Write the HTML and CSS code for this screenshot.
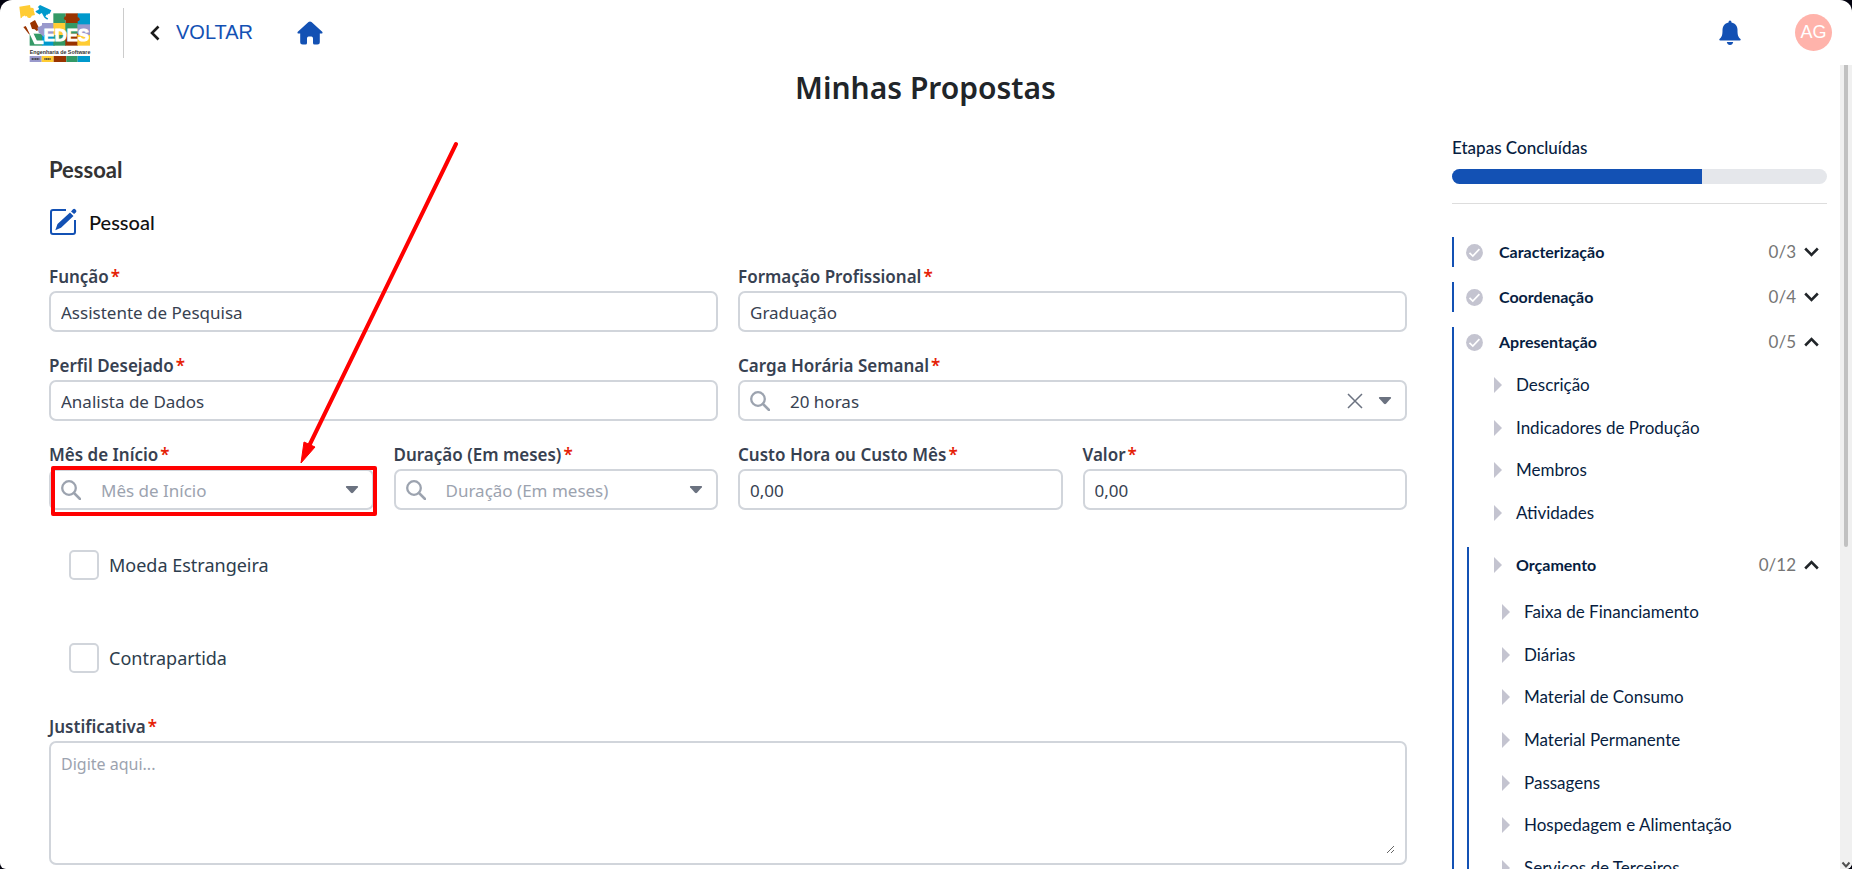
FILE: index.html
```html
<!DOCTYPE html>
<html lang="pt-BR">
<head>
<meta charset="utf-8">
<title>Minhas Propostas</title>
<meta name="viewport" content="width=device-width, initial-scale=1">
<link rel="stylesheet" href="styles.css">
</head>
<body>
<svg class="sprite" aria-hidden="true">
  <symbol id="i-search" viewBox="0 0 20 20"><circle cx="8" cy="8" r="6.8" fill="none" stroke="currentColor" stroke-width="2.3"/><path d="M13 13l6 6" stroke="currentColor" stroke-width="2.5" stroke-linecap="round"/></symbol>
  <symbol id="i-caret" viewBox="0 0 14 9"><path d="M1.6 1h10.8q1.2.2.5 1.2L8 7.7q-1 .9-2 0L1.100 2.200q-.7-1 .5-1.200z" fill="currentColor"/></symbol>
  <symbol id="i-check" viewBox="0 0 17 17"><circle cx="8.500" cy="8.500" r="8.400" fill="#c4c4d0"/><path d="M3.500 8.800l3.300 3.200 6.600-6.800" fill="none" stroke="#fff" stroke-width="1.700"/></symbol>
  <symbol id="i-down" viewBox="0 0 15 10"><path d="M1.200 1.500l6.300 6.300 6.300-6.300" fill="none" stroke="#212529" stroke-width="2.600"/></symbol>
  <symbol id="i-up" viewBox="0 0 15 10"><path d="M1.200 8.500l6.300-6.300 6.300 6.300" fill="none" stroke="#212529" stroke-width="2.600"/></symbol>
  <symbol id="i-tri" viewBox="0 0 8 16"><path d="M0 0l8 8-8 8z" fill="#c4c4d0"/></symbol>
</svg>
<div class="app">
  <header class="topbar">
    <svg class="logo" viewBox="0 0 252 192" role="img" aria-label="LEDES Engenharia de Software">
      <rect x="118" y="37" width="37" height="32" fill="#339966"/>
      <rect x="155" y="37" width="37" height="32" fill="#993300"/>
      <rect x="191" y="37" width="37" height="36" fill="#0099cc"/>
      <rect x="84" y="66" width="36" height="40" fill="#9999cc"/>
      <rect x="118" y="66" width="38" height="40" fill="#ffcc33"/>
      <rect x="154" y="66" width="38" height="36" fill="#339966"/>
      <rect x="190" y="70" width="38" height="36" fill="#9999cc"/>
      <rect x="47" y="98" width="38" height="36" fill="#339966"/>
      <rect x="84" y="102" width="38" height="32" fill="#0099cc"/>
      <rect x="118" y="102" width="38" height="32" fill="#339966"/>
      <rect x="154" y="98" width="38" height="36" fill="#993300"/>
      <rect x="190" y="102" width="38" height="32" fill="#ffcc33"/>
      <circle cx="156" cy="52" r="6" fill="#993300"/><circle cx="191" cy="55" r="6" fill="#993300"/>
      <path d="M16 17l32-5 2 9c5-3 12 1 9 7l4 14-10 2c-1 9-14 9-14 1l-19 7z" fill="#ffcc33"/>
      <path d="M78 12l34 16-5 10c-8-1-10 8-3 11l-4 7-36-24 5-4c7 0 8-8 2-9z" fill="#0099cc"/>
      <path d="M48 66l15-9 14 28-9 5-6-5-8-1z" fill="#993300"/>
      <path d="M28 78l8-3 15 24-6 1z" fill="#993300"/>
      <path d="M70 80l20-10v38l-16-14z" fill="#9999cc"/>
      <path d="M28 46l37 78h24" fill="none" stroke="#fff" stroke-width="11"/>
      <path d="M64 45l15 27M80 38l13 24M96 44l14 8" stroke="#fff" stroke-width="8"/>
      <text class="logo-name" x="89" y="121">EDES</text>
      <text class="logo-sub" x="47" y="159">Engenharia de Software</text>
      <rect x="47" y="165" width="36" height="18" fill="#9999cc"/><rect x="83" y="165" width="36" height="18" fill="#ffcc33"/>
      <rect x="119" y="165" width="38" height="18" fill="#993300"/><rect x="157" y="165" width="34" height="18" fill="#339966"/><rect x="191" y="165" width="37" height="18" fill="#0099cc"/>
      <path d="M53 174h23M91 174h20" stroke="#333" stroke-width="5" stroke-dasharray="4 1"/>
    </svg>
    <a class="back" href="#">
      <svg width="10" height="16" viewBox="0 0 10 16"><path d="M8.500 1.500L2 8l6.500 6.500" fill="none" stroke="#1b1b1b" stroke-width="2.600"/></svg>
      <span>VOLTAR</span>
    </a>
    <a class="home" href="#" aria-label="Início"><svg width="26" height="24" viewBox="0 0 26 24"><path d="M13 .5q.8 0 1.500.6l10.700 9.600q.8.800 0 1.800h-2.400v8.500q0 2.500-2.500 2.500h-2.800q-1.500 0-1.500-1.500v-4.500q0-2-1.600-2h-2.800q-1.600 0-1.600 2V22q0 1.500-1.500 1.500H5.700q-2.500 0-2.500-2.500v-8.500H.8q-.8-1 0-1.800L11.500 1.100Q12.200.5 13 .5z" fill="#1351b4"/></svg></a>
    <button class="bell" type="button" aria-label="Notificações"><svg width="22" height="26" viewBox="0 0 22 26"><path d="M11 .5q1.500 0 1.500 2c4 .8 6 4 6 7.500 0 5 .6 7 3 9q.7 1.500-.8 1.500H1.300q-1.500 0-.8-1.500c2.400-2 3-4 3-9 0-3.500 2-6.700 6-7.500q0-2 1.500-2zM7.800 22h6.400q-.6 3-3.200 3t-3.200-3z" fill="#1351b4"/></svg></button>
    <button class="avatar" type="button">AG</button>
  </header>
  <div class="body">
    <div class="page">
      <h1>Minhas Propostas</h1>
      <div class="columns">
        <form class="form">
          <h2>Pessoal</h2>
          <h3><svg width="28" height="28" viewBox="0 0 28 28"><path d="M17 2H4Q2 2 2 4v20q0 2 2 2h20q2 0 2-2V12" fill="none" stroke="#1351b4" stroke-width="2"/><path d="M21 4.500l3.500 3.500L12 19.800 6.300 22.200 8.500 16zM22 3.400L24 1.300q1.200-1 2.400.2l.6.600q1 1.200-.2 2.300l-1.700 1.700z" fill="#1351b4"/></svg>Pessoal</h3>
          <div class="grid">
            <div class="field wide"><label for="funcao">Função<b>*</b></label><input id="funcao" class="box" type="text" value="Assistente de Pesquisa"></div>
            <div class="field wide"><label for="formacao">Formação Profissional<b>*</b></label><input id="formacao" class="box" type="text" value="Graduação"></div>
            <div class="field wide"><label for="perfil">Perfil Desejado<b>*</b></label><input id="perfil" class="box" type="text" value="Analista de Dados"></div>
            <div class="field wide"><label for="carga">Carga Horária Semanal<b>*</b></label>
              <div class="box combo"><svg class="search"><use href="#i-search"/></svg><select id="carga"><option>20 horas</option></select><button class="clear" type="button" aria-label="Limpar"><svg width="16" height="16" viewBox="0 0 16 16"><path d="M1 1l14 14M15 1L1 15" stroke="#6b7280" stroke-width="1.500"/></svg></button><svg class="caret"><use href="#i-caret"/></svg></div></div>
            <div class="field marked"><label for="mes">Mês de Início<b>*</b></label>
              <div class="box combo"><svg class="search"><use href="#i-search"/></svg><select id="mes" class="empty"><option>Mês de Início</option></select><svg class="caret"><use href="#i-caret"/></svg></div></div>
            <div class="field"><label for="duracao">Duração (Em meses)<b>*</b></label>
              <div class="box combo"><svg class="search"><use href="#i-search"/></svg><select id="duracao" class="empty"><option>Duração (Em meses)</option></select><svg class="caret"><use href="#i-caret"/></svg></div></div>
            <div class="field"><label for="custo">Custo Hora ou Custo Mês<b>*</b></label><input id="custo" class="box" type="text" value="0,00"></div>
            <div class="field"><label for="valor">Valor<b>*</b></label><input id="valor" class="box" type="text" value="0,00"></div>
          </div>
          <div class="checks">
            <label><input type="checkbox">Moeda Estrangeira</label>
            <label><input type="checkbox">Contrapartida</label>
          </div>
          <div class="field"><label for="just">Justificativa<b>*</b></label><div class="area"><textarea id="just" placeholder="Digite aqui..."></textarea></div></div>
        </form>
        <aside class="steps">
          <p class="done">Etapas Concluídas</p>
          <div class="progress"><div class="fill"></div></div>
          <hr>
          <section class="step"><button type="button"><svg class="check"><use href="#i-check"/></svg><span class="name">Caracterização</span><span class="count">0/3</span><svg class="chev"><use href="#i-down"/></svg></button></section>
          <section class="step"><button type="button"><svg class="check"><use href="#i-check"/></svg><span class="name">Coordenação</span><span class="count">0/4</span><svg class="chev"><use href="#i-down"/></svg></button></section>
          <section class="step"><button type="button"><svg class="check"><use href="#i-check"/></svg><span class="name">Apresentação</span><span class="count">0/5</span><svg class="chev"><use href="#i-up"/></svg></button>
            <ul class="sub first">
              <li><a href="#"><svg class="tri"><use href="#i-tri"/></svg>Descrição</a></li>
              <li><a href="#"><svg class="tri"><use href="#i-tri"/></svg>Indicadores de Produção</a></li>
              <li><a href="#"><svg class="tri"><use href="#i-tri"/></svg>Membros</a></li>
              <li><a href="#"><svg class="tri"><use href="#i-tri"/></svg>Atividades</a></li>
            </ul>
            <section class="nested"><button type="button"><svg class="tri"><use href="#i-tri"/></svg><span class="name">Orçamento</span><span class="count">0/12</span><svg class="chev"><use href="#i-up"/></svg></button>
              <ul class="sub second">
                <li><a href="#"><svg class="tri"><use href="#i-tri"/></svg>Faixa de Financiamento</a></li>
                <li><a href="#"><svg class="tri"><use href="#i-tri"/></svg>Diárias</a></li>
                <li><a href="#"><svg class="tri"><use href="#i-tri"/></svg>Material de Consumo</a></li>
                <li><a href="#"><svg class="tri"><use href="#i-tri"/></svg>Material Permanente</a></li>
                <li><a href="#"><svg class="tri"><use href="#i-tri"/></svg>Passagens</a></li>
                <li><a href="#"><svg class="tri"><use href="#i-tri"/></svg>Hospedagem e Alimentação</a></li>
                <li><a href="#"><svg class="tri"><use href="#i-tri"/></svg>Serviços de Terceiros</a></li>
              </ul>
            </section>
          </section>
        </aside>
      </div>
    </div>
    <div class="scrollbar"><div class="thumb"></div><svg width="10" height="8" viewBox="0 0 10 8"><path d="M1.500 1.500L5 5.500l3.500-4" fill="none" stroke="#505050" stroke-width="2"/></svg></div>
  </div>
  <svg class="arrow" viewBox="0 0 170 330" aria-hidden="true"><path d="M162 8L16 308" stroke="#f00" stroke-width="4" stroke-linecap="round"/><path d="M7 327l3-21 11 5z" fill="#f00" stroke="#f00"/></svg>
</div>
</body>
</html>
```

FILE: styles.css
```css
* { box-sizing: border-box; }
html, body { height: 100%; }
body { margin: 0; background: #03030f; font-family: "Noto Sans", "Open Sans", sans-serif; font-size: 17px; color: #374151; }
button { font: inherit; color: inherit; background: none; border: 0; padding: 0; }
a { color: inherit; text-decoration: none; }
svg { display: block; flex: none; }
.sprite { display: none; }

.app { position: relative; height: 100vh; display: flex; flex-direction: column; background: #fff; border-radius: 12px 12px 6px 6px; overflow: hidden; }

.topbar { display: flex; align-items: center; flex: none; height: 65px; padding: 0 20px 0 14px; }
.logo { width: 84px; height: 64px; }
.logo-name { font: bold 50px "Liberation Sans", Arial, sans-serif; fill: #fff; stroke: #fff; stroke-width: 3px; }
.logo-sub { font: bold 16px "Liberation Sans", Arial, sans-serif; fill: #333; }
.back { display: flex; align-items: center; gap: 16px; height: 50px; margin-left: 25px; padding-left: 26px; border-left: 1px solid #ccc; font: 20px/46px "Liberation Sans", Arial, sans-serif; color: #1351b4; }
.back span { padding-bottom: 2px; }
.home { margin-left: 44px; }
.bell { margin-left: auto; }
.avatar { width: 37px; height: 37px; margin-left: 54px; border-radius: 50%; background: #ffb3ab; color: #fff; font: 18px "Liberation Sans", Arial, sans-serif; }

.body { display: flex; flex: 1; min-height: 0; }
.page { flex: 1; overflow: hidden; padding-right: 13px; }
.scrollbar { display: flex; flex-direction: column; justify-content: space-between; align-items: center; width: 12px; background: #f0f0f0; }
.thumb { width: 4px; height: 60%; background: #c1c1c1; border-radius: 0 0 2px 2px; }

h1 { margin: 0; padding-left: 24px; text-align: center; font-size: 30px; line-height: 46px; font-weight: 600; color: #212529; }
.columns { display: flex; gap: 45px; padding-left: 49px; }
.form { flex: 1; min-width: 0; padding-top: 43px; }
h2, h3 { margin: 0; font-family: Lato, sans-serif; }
h2 { font-size: 22px; line-height: 32px; font-weight: 700; color: #333; }
h3 { display: flex; align-items: center; gap: 12px; margin: 22px 0 29px; font-size: 20px; line-height: 28px; font-weight: 500; color: #111; }

.grid { display: grid; grid-template-columns: repeat(4, 1fr); gap: 22px 20px; }
.wide { grid-column: span 2; }
.field > label { display: block; line-height: 24px; padding-bottom: 2px; font-size: 17px; font-weight: 600; }
.field b { margin-left: 2px; font-weight: 600; color: #e52207; }
.box, .area { display: flex; width: 100%; height: 41px; border: 2px solid #d1d5db; border-radius: 7px; background: #fff; }
input.box { padding: 2px 10px 0; font: inherit; color: #374151; outline: 0; }
.combo { align-items: center; padding: 0 13px 0 10px; }
.combo select { flex: 1; min-width: 0; margin-left: 16px; padding: 2px 4px 0; border: 0; background: none; appearance: none; font: inherit; color: #374151; }
.combo select.empty { color: #9ca3af; }
.search { width: 20px; height: 20px; color: #9ca3af; }
.caret { width: 14px; height: 9px; color: #6b7280; }
.clear { margin-right: 15px; }
.marked { position: relative; }
.marked::after { content: ""; position: absolute; inset: 23px -3px -6px 2px; border: 4px solid #f00; border-radius: 2px; pointer-events: none; }

.checks { display: grid; gap: 63px; padding: 40px 20px 42px; }
.checks label { display: flex; align-items: center; gap: 10px; font-size: 18px; line-height: 30px; color: #2d3d4d; }
.checks input { appearance: none; width: 30px; height: 30px; margin: 0; border: 2px solid #d1d5db; border-radius: 5px; }
.area { height: 124px; padding: 9px 10px; }
textarea { width: 100%; height: 100%; padding: 0; border: 0; outline: 0; resize: vertical; background: none; font: inherit; font-size: 16px; line-height: 24px; color: #374151; }
textarea::placeholder { color: #9ca3af; }

.steps { flex: none; width: 375px; padding-top: 25px; font: 17px Lato, sans-serif; color: #071d41; }
.done { margin: 0 0 9px; line-height: 24px; font-weight: 500; }
.progress { height: 15px; border-radius: 8px; background: #e5e7eb; overflow: hidden; }
.fill { width: 66.67%; height: 100%; background: #1351b4; }
hr { height: 1px; margin: 19px 0 33px; border: 0; background: #ddd; }
.step { margin-bottom: 15px; border-left: 2px solid #1351b4; }
.step button { display: flex; align-items: center; width: 100%; height: 30px; padding: 0 8px 0 12px; text-align: left; }
.check { width: 17px; height: 17px; margin-right: 16px; }
.tri { width: 8px; height: 16px; margin-right: 14px; }
.name { flex: 1; padding-bottom: 2px; font-size: 16px; font-weight: 700; }
.count { margin-right: 8px; padding-bottom: 2px; color: #757575; }
.chev { width: 15px; height: 10px; }
.sub { display: grid; grid-auto-rows: 1fr; margin: 0; padding: 0; list-style: none; }
.sub li { display: flex; align-items: center; }
.sub a { display: flex; align-items: center; line-height: 18px; }
.first { height: 170px; margin-top: 7px; padding-left: 40px; }
.nested { margin: 13px 0 0 13px; border-left: 2px solid #1351b4; }
.nested > button { height: 36px; padding-left: 25px; }
.second { height: 298px; margin-top: 8px; padding-left: 33px; }

.arrow { position: absolute; left: 294px; top: 136px; width: 170px; height: 330px; pointer-events: none; }
```
